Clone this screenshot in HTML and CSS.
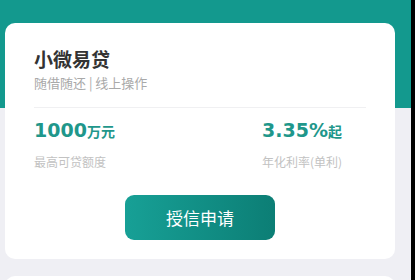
FILE: index.html
```html
<!DOCTYPE html>
<html lang="zh-CN">
<head>
    <meta charset="UTF-8">
    <meta name="viewport" content="width=device-width, initial-scale=1.0">
    <title>小微易贷</title>
    <link rel="stylesheet" href="styles.css">
</head>
<body>
    <div class="page">
        <div class="loan-card">
            <div class="loan-title">小微易贷</div>
            <div class="loan-sub">随借随还 | 线上操作</div>
            <div class="divider"></div>
            <div class="stats">
                <div class="stat">
                    <div class="stat-value">1000<span class="unit">万元</span></div>
                    <div class="stat-label">最高可贷额度</div>
                </div>
                <div class="stat">
                    <div class="stat-value">3.35%<span class="unit">起</span></div>
                    <div class="stat-label">年化利率(单利)</div>
                </div>
            </div>
            <button class="apply-btn">授信申请</button>
        </div>
        <div class="loan-card next-card"></div>
    </div>
</body>
</html>
```

FILE: styles.css
```css
body {
    margin: 0;
    background: #000;
    font-family: "Noto Sans CJK SC", "Noto Sans", sans-serif;
    overflow: hidden;
}

.page {
    width: 411px;
    height: 280px;
    padding-top: 23px;
    box-sizing: border-box;
    background: linear-gradient(180deg, #13998e 0, #13998e 108px, #efeff4 108px);
    overflow: hidden;
}

.loan-card {
    margin: 0 16px 0 5px;
    padding: 23px 29px 19px;
    background: #fff;
    border-radius: 10px;
}

.loan-title {
    font-size: 19px;
    line-height: 26px;
    font-weight: bold;
    color: #333;
}

.loan-sub {
    margin-top: 2px;
    font-size: 13px;
    line-height: 18px;
    color: #a9a9a9;
}

.divider {
    height: 1px;
    margin-top: 15px;
    background: #f0f0f2;
}

.stats {
    display: grid;
    grid-template-columns: 228px 1fr;
    margin-top: 10px;
}

.stat-value {
    font-family: "DejaVu Sans", sans-serif;
    font-size: 19px;
    line-height: 24px;
    font-weight: bold;
    color: #1f978b;
}

.stat-value .unit {
    font-family: "Noto Sans CJK SC", sans-serif;
    font-size: 14px;
}

.stat-label {
    margin-top: 11px;
    font-size: 12px;
    line-height: 16px;
    color: #c2c2c2;
}

.apply-btn {
    display: block;
    width: 150px;
    height: 45px;
    margin: 25px auto 0;
    border: none;
    border-radius: 9px;
    background: linear-gradient(90deg, #17a096, #0c7e75);
    color: #fff;
    font-family: "Noto Sans CJK SC", sans-serif;
    font-size: 17px;
    cursor: pointer;
}

.next-card {
    height: 40px;
    margin-top: 17px;
    padding: 0;
}
```
